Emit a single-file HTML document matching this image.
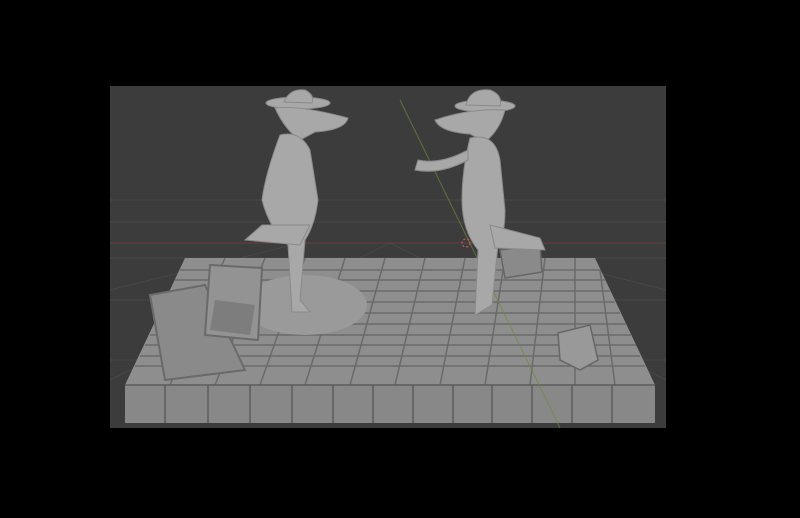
<!DOCTYPE html>
<html><head><meta charset="utf-8"><style>
html,body{margin:0;padding:0;background:#000;width:800px;height:518px;overflow:hidden}
svg{display:block}
</style></head><body>
<svg width="800" height="518" viewBox="0 0 800 518" xmlns="http://www.w3.org/2000/svg">
<rect width="800" height="518" fill="#000"/>
<rect x="110" y="86" width="556" height="342" fill="#3c3c3c"/>
<g stroke="#474747" stroke-width="1" fill="none">
<line x1="110" y1="200" x2="666" y2="200"/><line x1="110" y1="222" x2="666" y2="222"/>
<line x1="110" y1="258" x2="666" y2="258"/><line x1="110" y1="300" x2="666" y2="300"/>
<line x1="110" y1="360" x2="666" y2="360"/>
<line x1="390" y1="243" x2="110" y2="380"/><line x1="390" y1="243" x2="666" y2="380"/>
<line x1="300" y1="243" x2="110" y2="290"/><line x1="480" y1="243" x2="666" y2="290"/>
</g>
<line x1="110" y1="243" x2="666" y2="243" stroke="#6a3c3c" stroke-width="1"/>
<!-- platform top -->
<polygon points="185,258 595,258 655,385 125,385" fill="#8e8e8e"/>
<g stroke="#6a6a6a" stroke-width="1.5">
<line x1="180" y1="270" x2="600" y2="270"/>
<line x1="175" y1="280" x2="605" y2="280"/><line x1="170" y1="291" x2="610" y2="291"/><line x1="165" y1="302" x2="615" y2="302"/>
<line x1="160" y1="313" x2="620" y2="313"/>
<line x1="155" y1="324" x2="626" y2="324"/><line x1="150" y1="335" x2="631" y2="335"/><line x1="145" y1="345" x2="636" y2="345"/>
<line x1="140" y1="356" x2="640" y2="356"/>
<line x1="135" y1="366" x2="645" y2="366"/>
<line x1="225" y1="258" x2="170" y2="385"/><line x1="265" y1="258" x2="215" y2="385"/>
<line x1="305" y1="258" x2="260" y2="385"/><line x1="345" y1="258" x2="305" y2="385"/>
<line x1="385" y1="258" x2="350" y2="385"/><line x1="425" y1="258" x2="395" y2="385"/>
<line x1="465" y1="258" x2="440" y2="385"/><line x1="505" y1="258" x2="485" y2="385"/>
<line x1="545" y1="258" x2="530" y2="385"/><line x1="575" y1="258" x2="575" y2="385"/>
<line x1="600" y1="270" x2="615" y2="385"/>
</g>
<!-- front face -->
<rect x="125" y="385" width="530" height="38" fill="#888"/>
<g stroke="#5c5c5c" stroke-width="1.5">
<line x1="125" y1="385" x2="655" y2="385"/>
<line x1="165" y1="385" x2="165" y2="423"/><line x1="208" y1="385" x2="208" y2="423"/>
<line x1="250" y1="385" x2="250" y2="423"/><line x1="292" y1="385" x2="292" y2="423"/>
<line x1="333" y1="385" x2="333" y2="423"/><line x1="373" y1="385" x2="373" y2="423"/>
<line x1="413" y1="385" x2="413" y2="423"/><line x1="453" y1="385" x2="453" y2="423"/>
<line x1="492" y1="385" x2="492" y2="423"/><line x1="532" y1="385" x2="532" y2="423"/>
<line x1="572" y1="385" x2="572" y2="423"/><line x1="612" y1="385" x2="612" y2="423"/>
</g>
<line x1="400" y1="100" x2="560" y2="428" stroke="#6a8a3a" stroke-width="1" opacity="0.7"/>
<!-- base disc -->
<ellipse cx="305" cy="305" rx="62" ry="30" fill="#9a9a9a"/>
<!-- crates left -->
<polygon points="150,295 205,285 245,370 165,380" fill="#8a8a8a" stroke="#6a6a6a" stroke-width="2"/>
<polygon points="210,265 262,268 258,340 205,335" fill="#939393" stroke="#6a6a6a" stroke-width="2"/>
<polygon points="215,300 255,305 250,335 210,330" fill="#7d7d7d"/>
<!-- small crates right -->
<polygon points="500,250 540,245 542,272 505,278" fill="#8a8a8a" stroke="#666" stroke-width="1.5"/>
<polygon points="558,333 590,325 598,360 580,370 560,360" fill="#999" stroke="#666" stroke-width="1.5"/>
<!-- left figure -->
<g fill="#a8a8a8" stroke="#8a8a8a" stroke-width="1">
<ellipse cx="298" cy="103" rx="32" ry="6"/>
<path d="M284,102 Q290,88 305,90 Q315,95 312,103 Z"/>
<path d="M275,108 Q300,105 348,118 Q345,130 315,132 L300,140 Q285,130 275,108 Z"/>
<path d="M280,135 Q300,130 310,150 L318,200 Q315,225 305,240 L300,300 L310,312 L292,312 L288,245 Q270,230 262,200 Q265,175 280,135 Z"/>
<path d="M262,225 L245,240 L300,245 L310,225 Z"/>
</g>
<!-- right figure -->
<g fill="#a8a8a8" stroke="#8a8a8a" stroke-width="1">
<ellipse cx="485" cy="106" rx="30" ry="6"/>
<path d="M466,105 Q470,88 490,90 Q503,95 500,106 Z"/>
<path d="M505,110 Q470,108 435,120 Q440,132 470,134 L485,142 Q500,130 505,110 Z"/>
<path d="M470,138 Q495,132 500,160 L505,210 Q505,235 498,245 L492,305 L475,315 L478,250 Q462,230 462,200 Q462,170 470,138 Z"/>
<path d="M468,160 Q440,175 415,170 L418,160 Q440,165 468,150 Z"/>
<path d="M490,225 L540,238 L545,250 L495,248 Z"/>
</g>
<circle cx="466" cy="243" r="4" fill="none" stroke="#c06060" stroke-width="1.2" stroke-dasharray="2 2"/>
</svg>
</body></html>
